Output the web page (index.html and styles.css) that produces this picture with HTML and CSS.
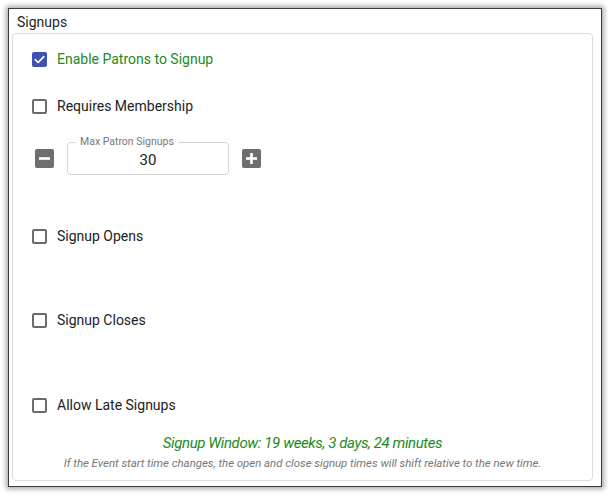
FILE: index.html
```html
<!DOCTYPE html>
<html>
<head>
<meta charset="utf-8">
<link rel="stylesheet" href="styles.css">
</head>
<body>
<div class="frame">
  <div class="title">Signups</div>
  <div class="panel">
    <label class="row row-enable">
      <span class="box checked">
        <svg viewBox="0 0 16 16" width="16" height="16"><path d="M3.5 8.2 L6.6 11.2 L12.6 5" fill="none" stroke="#fff" stroke-width="1.8" stroke-linecap="round" stroke-linejoin="round"/></svg>
      </span>
      <span class="label green">Enable Patrons to Signup</span>
    </label>
    <label class="row row-member">
      <span class="box"></span>
      <span class="label">Requires Membership</span>
    </label>
    <div class="stepper">
      <span class="step-btn">
        <svg viewBox="0 0 19 19" width="19" height="19"><rect x="4" y="8.2" width="11" height="2.6" fill="#fff"/></svg>
      </span>
      <div class="field">
        <span class="field-label">Max Patron Signups</span>
        <span class="field-value">30</span>
      </div>
      <span class="step-btn">
        <svg viewBox="0 0 19 19" width="19" height="19"><rect x="4" y="8.2" width="11" height="2.6" fill="#fff"/><rect x="8.2" y="4" width="2.6" height="11" fill="#fff"/></svg>
      </span>
    </div>
    <label class="row row-opens">
      <span class="box"></span>
      <span class="label">Signup Opens</span>
    </label>
    <label class="row row-closes">
      <span class="box"></span>
      <span class="label">Signup Closes</span>
    </label>
    <label class="row row-late">
      <span class="box"></span>
      <span class="label">Allow Late Signups</span>
    </label>
    <div class="window">Signup Window: 19 weeks, 3 days, 24 minutes</div>
    <div class="note">If the Event start time changes, the open and close signup times will shift relative to the new time.</div>
  </div>
</div>
</body>
</html>
```

FILE: styles.css
```css
html, body {
  margin: 0;
  padding: 0;
  background: #ffffff;
}

body {
  font-family: Roboto, "Liberation Sans", Arial, sans-serif;
  color: #222;
  width: 610px;
  height: 495px;
  overflow: hidden;
}

.frame {
  box-sizing: border-box;
  margin: 8px 0 0 8px;
  width: 594px;
  height: 479px;
  border: 1px solid #3a3a3a;
  box-shadow: 0 0 5px 2px rgba(0, 0, 0, 0.35);
  padding: 0 8px 5px 3px;
  display: flex;
  flex-direction: column;
}

.title {
  font-size: 14px;
  line-height: 22px;
  padding: 2px 0 0 5px;
  height: 22px;
  color: #1e1e1e;
}

.panel {
  flex: 1;
  border: 1px solid #dcdcdc;
  border-radius: 4px;
  padding: 0 0 0 19px;
  display: flex;
  flex-direction: column;
}

.row {
  display: flex;
  align-items: center;
  height: 24px;
}

.row-enable { margin-top: 13px; }
.row-member { margin-top: 23px; }
.row-opens { margin-top: 49px; }
.row-closes { margin-top: 60px; }
.row-late { margin-top: 61px; }

.box {
  box-sizing: border-box;
  width: 15px;
  height: 15px;
  border: 2px solid #6b6b6b;
  border-radius: 2px;
  display: flex;
  align-items: center;
  justify-content: center;
  flex: none;
}

.box.checked {
  border: none;
  background: #3f51b5;
  width: 15px;
  height: 15px;
}

.box svg {
  width: 15px;
  height: 15px;
}

.label {
  margin-left: 10px;
  font-size: 14px;
  color: #222;
}

.label.green {
  color: #1d8a1d;
}

.stepper {
  display: flex;
  align-items: center;
  margin-top: 24px;
  margin-left: 3px;
}

.step-btn {
  width: 19px;
  height: 19px;
  background: #6e6e6e;
  border-radius: 2px;
  display: flex;
  flex: none;
}

.field {
  position: relative;
  box-sizing: border-box;
  width: 162px;
  height: 33px;
  border: 1px solid #d6d6d6;
  border-radius: 4px;
  margin: 0 13px;
  display: flex;
  align-items: center;
  justify-content: center;
}

.field-label {
  position: absolute;
  top: -7px;
  left: 8px;
  padding: 0 4px;
  background: #fff;
  font-size: 10.5px;
  line-height: 12px;
  color: #777;
}

.field-value {
  font-size: 15px;
  color: #222;
  padding-top: 2px;
}

.window {
  margin-top: 17px;
  margin-left: -19px;
  text-align: center;
  font-style: italic;
  font-size: 15px;
  color: #1d8a1d;
  letter-spacing: -0.4px;
  line-height: 18px;
}

.note {
  margin-left: -19px;
  margin-top: 4px;
  text-align: center;
  font-style: italic;
  font-size: 11.5px;
  color: #777;
  letter-spacing: -0.05px;
  line-height: 14px;
}
```
